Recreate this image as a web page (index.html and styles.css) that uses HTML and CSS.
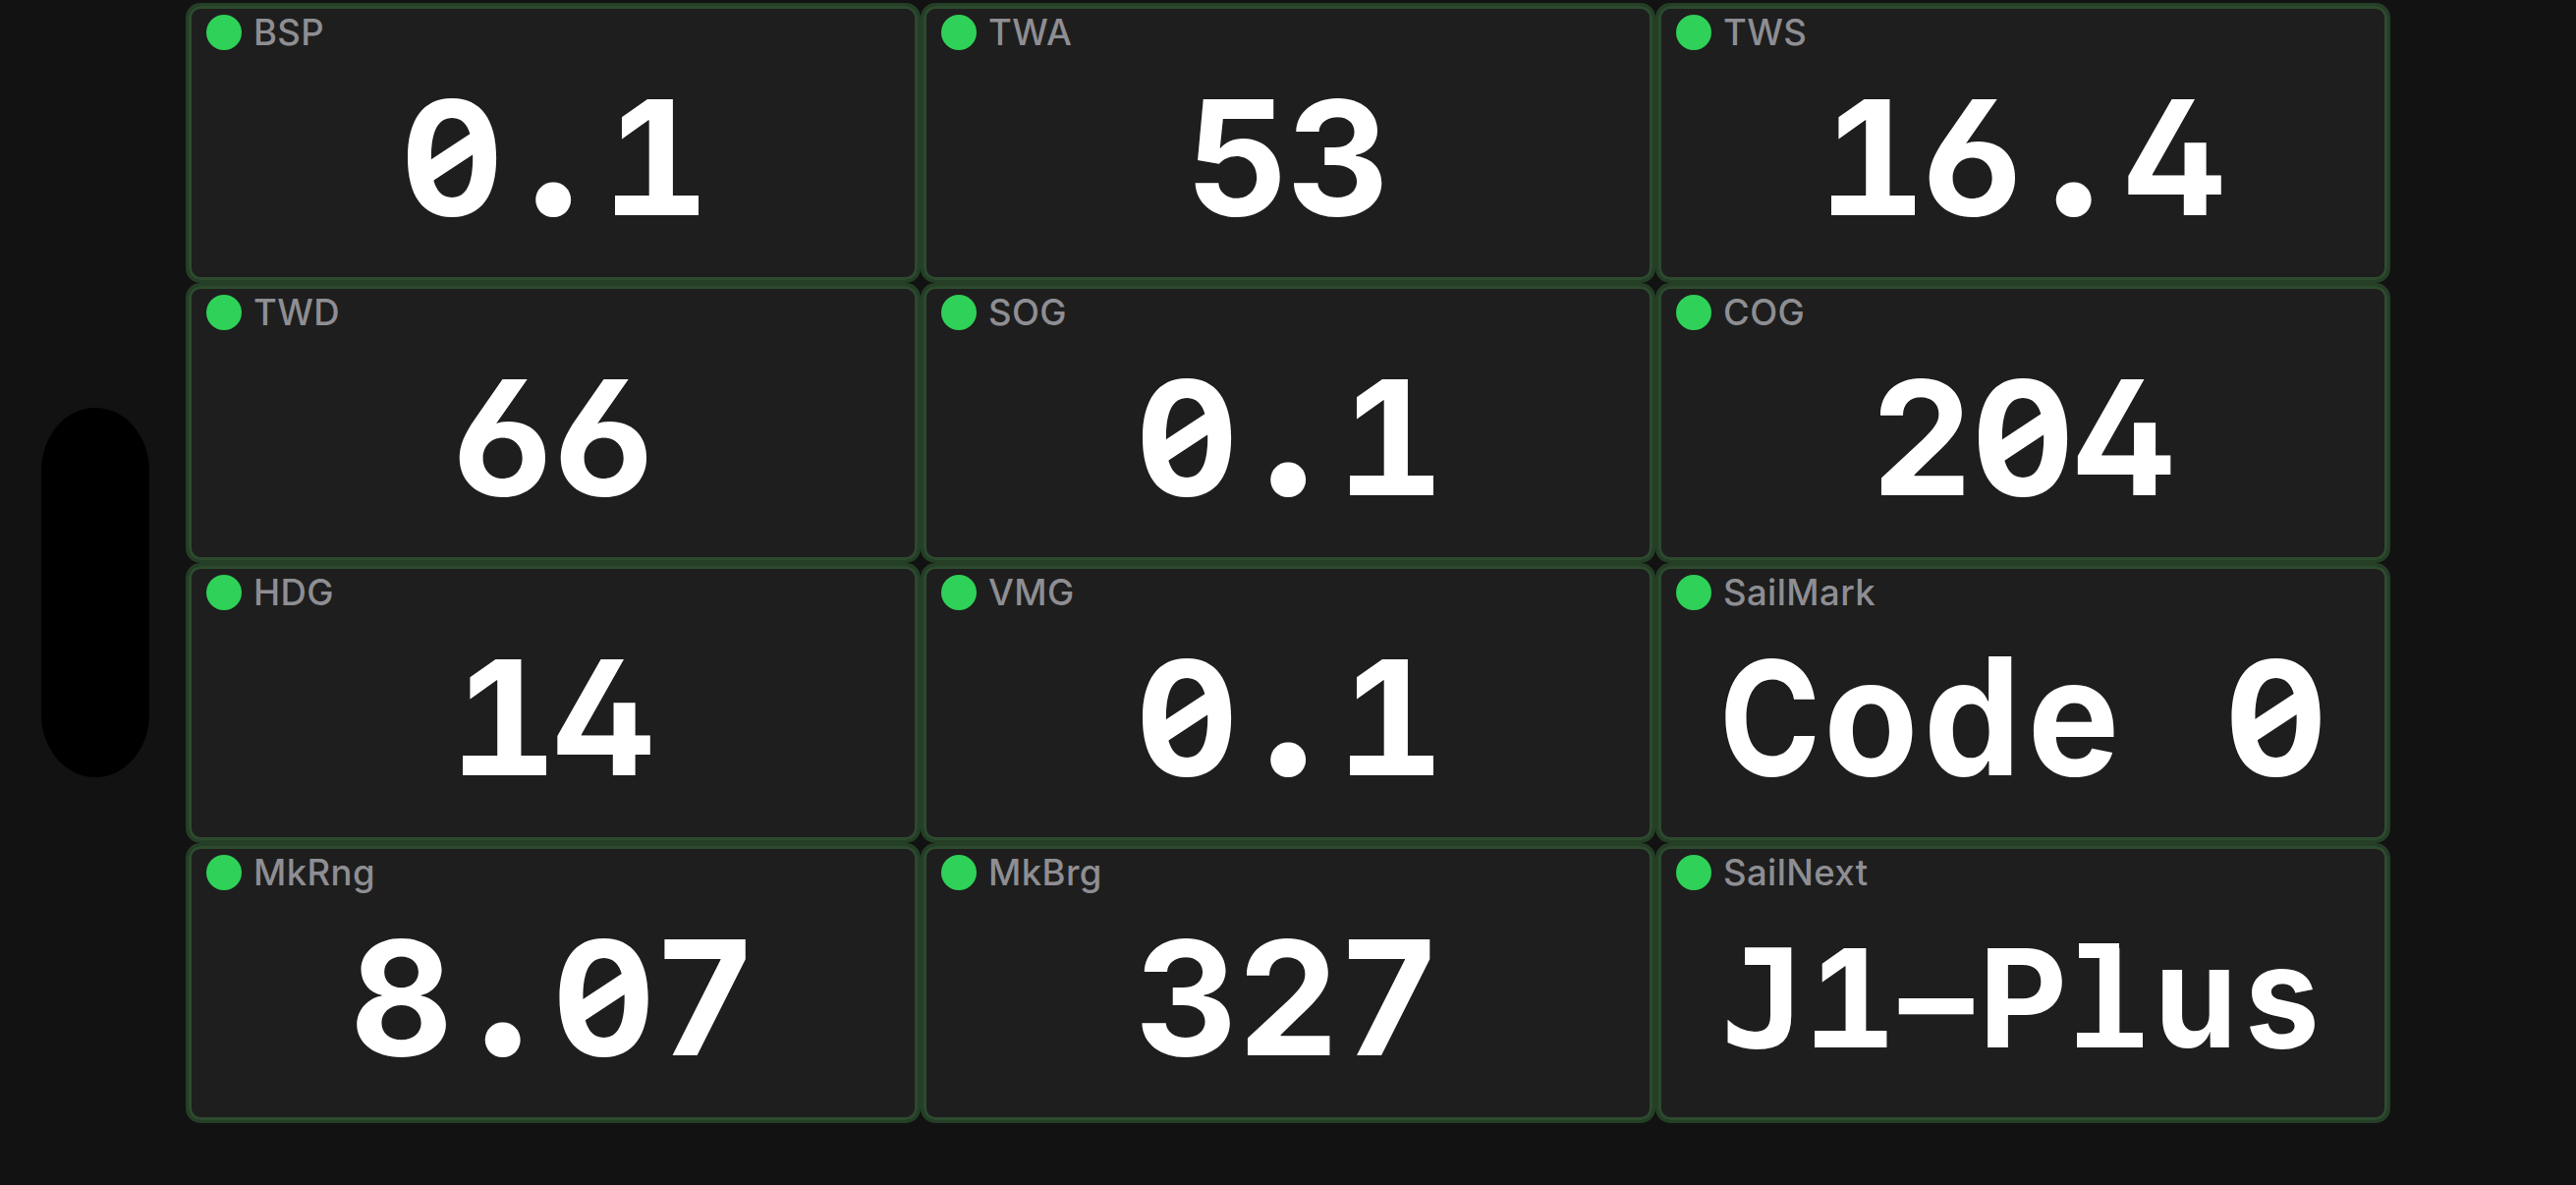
FILE: index.html
```
<!DOCTYPE html>
<html lang="en">
<head>
  <meta charset="UTF-8" />
  <meta name="viewport" content="width=device-width, initial-scale=1.0"/>
  <title>Instruments</title>
  <link rel="stylesheet" href="styles.css">
</head>
<body>
  <div class="side">
    <div class="island"></div>
  </div>
  <main class="grid">
    <div class="card">
      <div class="head"><span class="dot"></span><span class="label">BSP</span></div>
      <div class="value"><b class="zero">0</b><b class="point">.</b><b class="one">1</b></div>
    </div>
    <div class="card">
      <div class="head"><span class="dot"></span><span class="label">TWA</span></div>
      <div class="value"><b>5</b><b>3</b></div>
    </div>
    <div class="card">
      <div class="head"><span class="dot"></span><span class="label">TWS</span></div>
      <div class="value"><b class="one">1</b><b class="six">6</b><b class="point">.</b><b>4</b></div>
    </div>

    <div class="card">
      <div class="head"><span class="dot"></span><span class="label">TWD</span></div>
      <div class="value"><b class="six">6</b><b class="six">6</b></div>
    </div>
    <div class="card">
      <div class="head"><span class="dot"></span><span class="label">SOG</span></div>
      <div class="value"><b class="zero">0</b><b class="point">.</b><b class="one">1</b></div>
    </div>
    <div class="card">
      <div class="head"><span class="dot"></span><span class="label">COG</span></div>
      <div class="value"><b>2</b><b class="zero">0</b><b>4</b></div>
    </div>

    <div class="card">
      <div class="head"><span class="dot"></span><span class="label">HDG</span></div>
      <div class="value"><b class="one">1</b><b>4</b></div>
    </div>
    <div class="card">
      <div class="head"><span class="dot"></span><span class="label">VMG</span></div>
      <div class="value"><b class="zero">0</b><b class="point">.</b><b class="one">1</b></div>
    </div>
    <div class="card">
      <div class="head"><span class="dot"></span><span class="label">SailMark</span></div>
      <div class="value"><b class="upper">C</b><b class="lower">o</b><b class="lower">d</b><b class="lower">e</b><b>&nbsp;</b><b class="zero">0</b></div>
    </div>

    <div class="card">
      <div class="head"><span class="dot"></span><span class="label">MkRng</span></div>
      <div class="value"><b>8</b><b class="point">.</b><b class="zero">0</b><b>7</b></div>
    </div>
    <div class="card">
      <div class="head"><span class="dot"></span><span class="label">MkBrg</span></div>
      <div class="value"><b>3</b><b>2</b><b>7</b></div>
    </div>
    <div class="card">
      <div class="head"><span class="dot"></span><span class="label">SailNext</span></div>
      <div class="value small"><b class="slab">J</b><b class="one">1</b><b class="dash">-</b><b>P</b><b class="ell">l</b><b class="lower">u</b><b class="lower">s</b></div>
    </div>
  </main>
</body>
</html>
```
FILE: styles.css
```
* {
  box-sizing: border-box;
}

body {
  margin: 0;
  height: 1206px;
  display: flex;
  align-items: flex-start;
  background: #121212;
  font-family: Inter, 'Liberation Sans', sans-serif;
  overflow: hidden;
}

.side {
  width: 189px;
  height: 100%;
  padding-left: 42px;
  display: flex;
  align-items: center;
}

.island {
  width: 110px;
  height: 376px;
  border-radius: 55px / 64px;
  background: #000;
}

.grid {
  display: grid;
  grid-template-columns: repeat(3, 748px);
  grid-auto-rows: 285px;
  padding-top: 3px;
}

.card {
  display: flex;
  flex-direction: column;
  padding: 9px 18px 0;
  border: 3px solid #243f26;
  border-radius: 15px;
  background: #1e1e1e;
  box-shadow: inset 0 0 0 3px #2d4a2f;
}

.head {
  display: flex;
  align-items: center;
  gap: 12px;
  height: 36px;
}

.dot {
  width: 36px;
  height: 36px;
  border-radius: 50%;
  background: #30d158;
}

.label {
  color: #8e8e93;
  font-size: 36.5px;
  font-weight: 450;
  line-height: 36px;
  letter-spacing: 0.4px;
}

/* readout, one fixed-width cell per character */
.value {
  display: flex;
  justify-content: center;
  align-items: baseline;
  margin-top: 9px;
  color: #fff;
  font-size: 162px;
  line-height: 200px;
  font-feature-settings: 'tnum', 'cv02', 'cv03';
}

.value b {
  position: relative;
  width: 103px;
  display: flex;
  justify-content: center;
  font-weight: 700;
}

.value .point {
  font-size: 212px;
  line-height: 0;
}

.value .slab {
  font-family: 'DejaVu Sans Mono', monospace;
  line-height: 0;
}

.value .six {
  transform: scaleX(1.03);
}

/* slash through the zero */
.zero::after {
  content: "";
  position: absolute;
  left: 23px;
  top: 88px;
  width: 57px;
  height: 23px;
  background: #fff;
  transform: skewY(-33.4deg);
}

.value .one {
  left: 2px;
}

/* foot under the one */
.one::after {
  content: "";
  position: absolute;
  left: 9px;
  top: 139px;
  width: 85px;
  height: 20px;
  background: #fff;
}

.value .upper {
  transform: scaleX(0.86);
}

.value .lower {
  font-size: 167px;
  line-height: 0;
  transform: scaleX(0.94);
}

.small {
  margin-top: 10px;
  font-size: 139px;
}

.value.small b {
  width: 88px;
}

.value.small .lower {
  font-size: 144px;
}

.value.small .slab {
  transform: scaleX(1.06);
}

.small .one::after {
  left: 6px;
  top: 133px;
  width: 73px;
  height: 17px;
}

/* top and bottom serifs of the l */
.ell::before,
.ell::after {
  content: "";
  position: absolute;
  left: 11px;
  top: 135px;
  width: 67px;
  height: 15px;
  background: #fff;
}

.ell::before {
  left: 13px;
  top: 44px;
  width: 41px;
}

.small .dash {
  transform: scaleX(1.65);
}
```
